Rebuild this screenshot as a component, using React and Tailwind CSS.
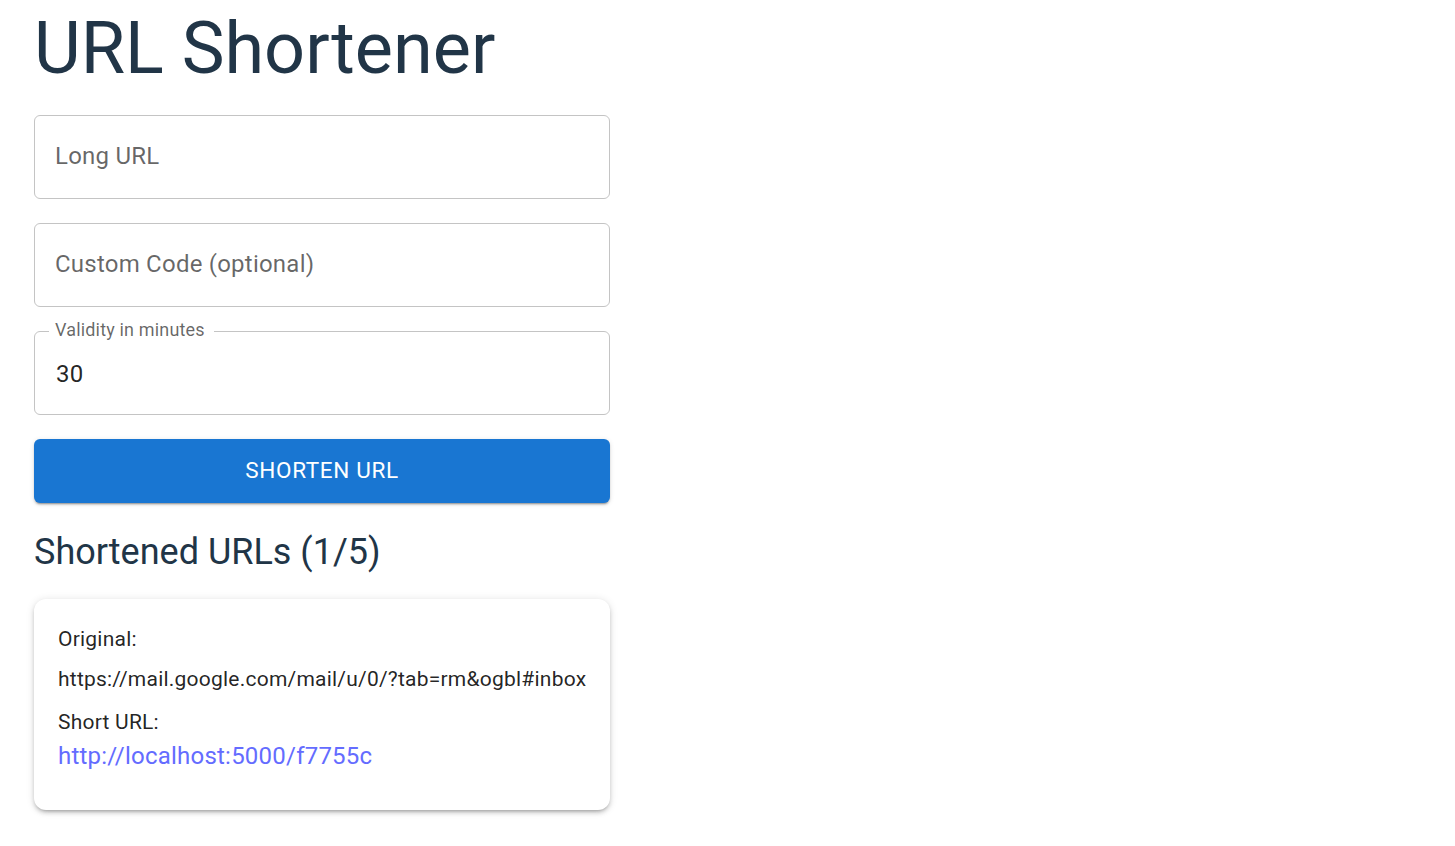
import { useState } from 'react';

function OutlinedField({ label, value, onChange }) {
  const filled = value !== '';
  return (
    <div className="relative h-[84px] w-full">
      <input
        value={value}
        onChange={(e) => onChange(e.target.value)}
        className="h-full w-full rounded-[6px] border border-[#c4c4c4] bg-white px-[21px] pt-[2px] text-[24px] tracking-[0.225px] text-[rgba(0,0,0,0.87)] outline-none"
      />
      {filled ? (
        <span className="pointer-events-none absolute left-[15px] top-[-13px] bg-white pl-[6px] pr-[9px] text-[18px] leading-[24px] tracking-[0.17px] text-[rgba(0,0,0,0.6)]">
          {label}
        </span>
      ) : (
        <span className="pointer-events-none absolute left-[21px] top-[26px] text-[24px] leading-[30px] tracking-[0.225px] text-[rgba(0,0,0,0.6)]">
          {label}
        </span>
      )}
    </div>
  );
}

export default function App() {
  const [longUrl, setLongUrl] = useState('');
  const [code, setCode] = useState('');
  const [validity, setValidity] = useState('30');

  const links = [
    {
      original: 'https://mail.google.com/mail/u/0/?tab=rm&ogbl#inbox',
      short: 'http://localhost:5000/f7755c',
    },
  ];

  return (
    <div className="min-h-screen bg-white pl-[34px] font-['Roboto',sans-serif]">
      <div className="w-[576px] pt-[7px]">
        <h1 className="text-[72px] font-normal leading-[84px] text-[#213547]">URL Shortener</h1>

        <div className="mt-[24px] flex flex-col gap-[24px]">
          <OutlinedField label="Long URL" value={longUrl} onChange={setLongUrl} />
          <OutlinedField label="Custom Code (optional)" value={code} onChange={setCode} />
          <OutlinedField label="Validity in minutes" value={validity} onChange={setValidity} />
          <button className="h-[64px] w-full rounded-[6px] bg-[#1976d2] text-[22.5px] font-normal uppercase tracking-[0.64px] text-white shadow-[0_3px_1px_-2px_rgba(0,0,0,0.2),0_2px_2px_0_rgba(0,0,0,0.14),0_1px_5px_0_rgba(0,0,0,0.12)]">
            Shorten URL
          </button>
        </div>

        <h2 className="mt-[25px] text-[36px] font-normal leading-[48px] text-[#213547]">
          Shortened URLs ({links.length}/5)
        </h2>

        <div className="mt-[23px] flex flex-col gap-[24px]">
          {links.map((l) => (
            <div
              key={l.short}
              className="rounded-[12px] bg-white px-[24px] pb-[36px] pt-[25px] shadow-[0_3px_3px_-2px_rgba(0,0,0,0.2),0_3px_4px_0_rgba(0,0,0,0.14),0_1px_8px_0_rgba(0,0,0,0.12)]"
            >
              <p className="text-[21px] leading-[30px] tracking-[0.225px] text-[rgba(0,0,0,0.87)]">Original:</p>
              <p className="mt-[10px] whitespace-nowrap text-[21px] leading-[30px] tracking-[0.225px] text-[rgba(0,0,0,0.87)]">
                {l.original}
              </p>
              <p className="mt-[13px] text-[21px] leading-[30px] tracking-[0.225px] text-[rgba(0,0,0,0.87)]">Short URL:</p>
              <a href="#" className="mt-[1px] block text-[24px] leading-[36px] tracking-[0.225px] text-[#646cff]">
                {l.short}
              </a>
            </div>
          ))}
        </div>
      </div>
    </div>
  );
}
